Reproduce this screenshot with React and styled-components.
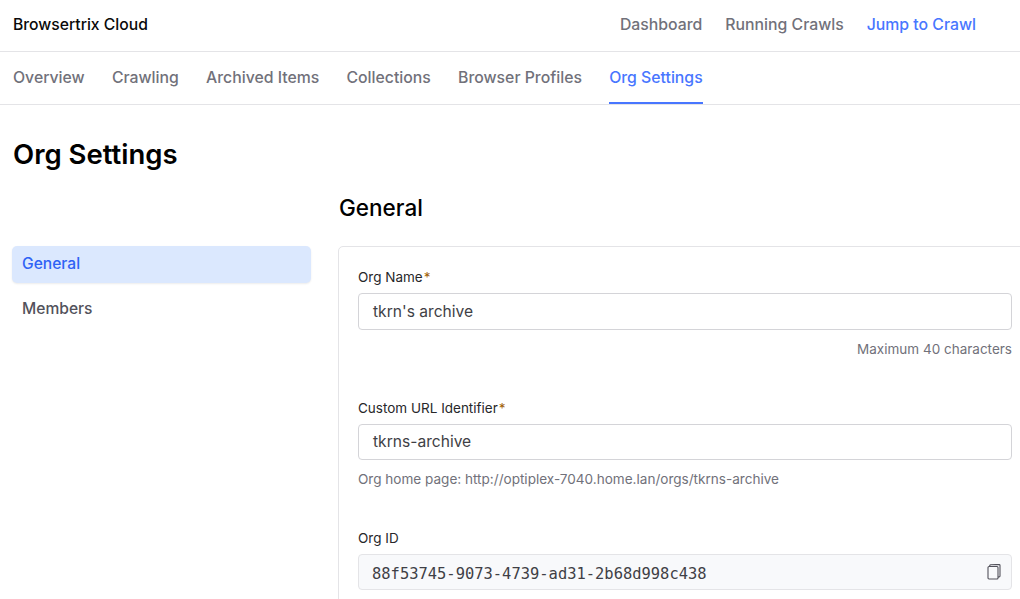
import React from 'react';
import styled, { createGlobalStyle } from 'styled-components';

const Global = createGlobalStyle`
  html, body {
    margin: 0;
    height: 599px;
    overflow: hidden;
    background: #fff;
    font-family: Inter, "Noto Sans", sans-serif;
  }
  * { box-sizing: border-box; }
`;

const S = {};
S.Header = styled('header')`
  height: 52px;
  border-bottom: 1px solid #e4e4e7;
  display: flex;
  align-items: center;
  justify-content: space-between;
  padding: 0 44px 2px 13px;
`;
S.Brand = styled('div')`
  font-size: 15.7px;
  font-weight: 500;
  color: #0a0a0a;
`;
S.HeaderLinks = styled('div')`
  display: flex;
  gap: 23px;
`;
S.HeaderLink = styled('a')`
  font-size: 15.8px;
  font-weight: 500;
  color: ${props => (props.$active ? '#4876ff' : '#71717a')};
`;
S.Tabs = styled('nav')`
  height: 53px;
  border-bottom: 1px solid #e4e4e7;
  display: flex;
  gap: 27.2px;
  padding: 0 13px;
`;
S.Tab = styled('a')`
  height: 52px;
  display: flex;
  align-items: center;
  font-size: 15.8px;
  font-weight: 500;
  color: ${props => (props.$active ? '#4876ff' : '#71717a')};
  border-bottom: 2px solid ${props => (props.$active ? '#4876ff' : 'transparent')};
`;
S.Title = styled('h1')`
  margin: 32px 0 0 13px;
  font-size: 27.5px;
  line-height: 34px;
  font-weight: 600;
  color: #000;
`;
S.Layout = styled('div')`
  display: grid;
  grid-template-columns: 299px 694px;
  column-gap: 27px;
  padding-left: 12px;
  margin-top: 22px;
`;
S.Side = styled('div')`
  display: flex;
  flex-direction: column;
  gap: 8px;
  padding-top: 53px;
`;
S.SideItem = styled('a')`
  height: 37px;
  border-radius: 5px;
  padding: 0 10px 3px;
  display: flex;
  align-items: center;
  font-size: 15.6px;
  font-weight: 500;
  color: ${props => (props.$active ? '#2f62f5' : '#52525b')};
  background: ${props => (props.$active ? '#dbe8fe' : 'transparent')};
  box-shadow: ${props => (props.$active ? '0 1px 2px rgba(0,0,0,.08)' : 'none')};
`;
S.Section = styled('section')`
  min-width: 0;
`;
S.SectionTitle = styled('h2')`
  margin: 0 0 23px 1px;
  font-size: 22.5px;
  line-height: 30px;
  font-weight: 500;
  color: #000;
`;
S.Card = styled('div')`
  border: 1px solid #e4e4e7;
  border-radius: 5px;
  padding: 20px 19px;
  height: 420px;
`;
S.Field = styled('div')`
  margin-bottom: ${props => props.$gap}px;
`;
S.Label = styled('label')`
  display: block;
  font-size: 13.5px;
  line-height: 20px;
  color: #27272a;
  margin-bottom: 6px;
`;
S.Star = styled('span')`
  color: #a16207;
  margin-left: 1px;
`;
S.Input = styled('div')`
  height: ${props => props.$h}px;
  border: 1px solid ${props => (props.$readonly ? '#e4e4e7' : '#d4d4d8')};
  border-radius: 4px;
  background: ${props => (props.$readonly ? '#f8f9fb' : '#fff')};
  display: flex;
  align-items: center;
  justify-content: space-between;
  padding: 0 10px 0 14px;
  padding-bottom: ${props => (props.$lift ? 1 : 0)}px;
  font-size: 15.6px;
  color: #3f3f46;
`;
S.Mono = styled('span')`
  font-family: "DejaVu Sans Mono", monospace;
  font-size: 15.45px;
  color: #3f3f46;
  margin: 3px 0 0 -1px;
`;
S.HelpRight = styled('div')`
  margin-top: 9px;
  text-align: right;
  font-size: 13.5px;
  line-height: 20px;
  color: #71717a;
`;
S.Help = styled('div')`
  margin-top: 9px;
  font-size: 13.55px;
  line-height: 20px;
  color: #71717a;
`;

const CopyIcon = () => (
  <svg width="14" height="16" viewBox="0 0 14 16" fill="none" stroke="#52525b" strokeWidth="1.1">
    <path d="M1 3.5a1 1 0 0 1 1-1h8a1 1 0 0 1 1 1V14a1 1 0 0 1-1 1H2a1 1 0 0 1-1-1z" />
    <path d="M2.500 2.400l.3-.9a1 1 0 0 1 .9-.7l8.300-.4a1 1 0 0 1 1 1v10.500a1 1 0 0 1-.9 1l-1.100.2" />
  </svg>
);

const tabs = ['Overview', 'Crawling', 'Archived Items', 'Collections', 'Browser Profiles', 'Org Settings'];

export default function App() {
  return (
    <>
      <Global />
      <S.Header>
        <S.Brand>Browsertrix Cloud</S.Brand>
        <S.HeaderLinks>
          <S.HeaderLink>Dashboard</S.HeaderLink>
          <S.HeaderLink>Running Crawls</S.HeaderLink>
          <S.HeaderLink $active>Jump to Crawl</S.HeaderLink>
        </S.HeaderLinks>
      </S.Header>
      <S.Tabs>
        {tabs.map(t => <S.Tab key={t} $active={t === 'Org Settings'}>{t}</S.Tab>)}
      </S.Tabs>
      <S.Title>Org Settings</S.Title>
      <S.Layout>
        <S.Side>
          <S.SideItem $active>General</S.SideItem>
          <S.SideItem>Members</S.SideItem>
        </S.Side>
        <S.Section>
          <S.SectionTitle>General</S.SectionTitle>
          <S.Card>
            <S.Field $gap={39}>
              <S.Label>Org Name<S.Star>*</S.Star></S.Label>
              <S.Input $h={37}>tkrn's archive</S.Input>
              <S.HelpRight>Maximum 40 characters</S.HelpRight>
            </S.Field>
            <S.Field $gap={39}>
              <S.Label>Custom URL Identifier<S.Star>*</S.Star></S.Label>
              <S.Input $h={36} $lift>tkrns-archive</S.Input>
              <S.Help>Org home page: http://optiplex-7040.home.lan/orgs/tkrns-archive</S.Help>
            </S.Field>
            <S.Field $gap={0}>
              <S.Label>Org ID</S.Label>
              <S.Input $h={36} $readonly>
                <S.Mono>88f53745-9073-4739-ad31-2b68d998c438</S.Mono>
                <CopyIcon />
              </S.Input>
            </S.Field>
          </S.Card>
        </S.Section>
      </S.Layout>
    </>
  );
}
